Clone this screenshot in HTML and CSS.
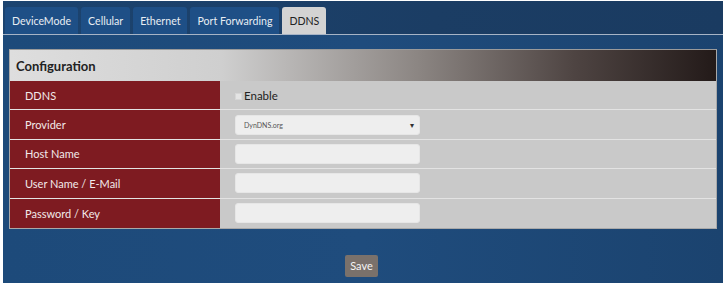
FILE: index.html
```html
<!DOCTYPE html>
<html>
<head>
<meta charset="utf-8">
<link rel="stylesheet" href="styles.css">
</head>
<body>
<div class="frame">
  <div class="tabbar">
    <div class="tab">DeviceMode</div>
    <div class="tab">Cellular</div>
    <div class="tab">Ethernet</div>
    <div class="tab">Port Forwarding</div>
    <div class="tab active">DDNS</div>
  </div>
  <div class="content">
    <div class="panel">
      <div class="panel-head">Configuration</div>
      <div class="row">
        <div class="label">DDNS</div>
        <div class="field"><span class="check"></span><span class="check-text">Enable</span></div>
      </div>
      <div class="row">
        <div class="label">Provider</div>
        <div class="field"><div class="select"><span>DynDNS.org</span><span class="arrow">▾</span></div></div>
      </div>
      <div class="row">
        <div class="label">Host Name</div>
        <div class="field"><div class="input"></div></div>
      </div>
      <div class="row">
        <div class="label">User Name / E-Mail</div>
        <div class="field"><div class="input"></div></div>
      </div>
      <div class="row last">
        <div class="label">Password / Key</div>
        <div class="field"><div class="input"></div></div>
      </div>
    </div>
    <div class="actions"><button class="save">Save</button></div>
  </div>
</div>
</body>
</html>
```
FILE: styles.css
```css
html, body { margin: 0; padding: 0; background: #ffffff; }
body { font-family: Lato, "Open Sans", sans-serif; }
.frame {
  margin: 1px 1px 0 3px;
  height: 282px;
  background: linear-gradient(90deg, #1d4a7a 0%, #1f4c7d 50%, #1b436f 100%);
}
.tabbar {
  height: 34px;
  box-sizing: border-box;
  padding: 6px 2px 1px 2px;
  display: flex;
  gap: 3px;
  background: linear-gradient(90deg, #1c4470 0%, #1b3d64 60%, #1a3b61 100%);
  border-bottom: 1px solid #a7b4c6;
}
.tab {
  height: 27px;
  box-sizing: border-box;
  padding: 0 7px;
  display: flex;
  align-items: center;
  justify-content: center;
  background: #1e4f86;
  color: #e8edf3;
  font-size: 10.6px;
  border-radius: 3px 3px 0 0;
}
.tab.active { background: #d3d3d3; color: #222; }
.content { padding: 14px 6px 0 6px; }
.panel { border: 1px solid #a9a9a9; border-top-color: #9a9a9a; }
.panel-head {
  height: 31px;
  box-sizing: border-box;
  padding-left: 6px;
  display: flex;
  align-items: center;
  font-weight: bold;
  font-size: 13px;
  color: #222;
  background: linear-gradient(90deg, #dedede 0%, #cfcfcf 30%, #8b8582 58%, #4e4442 80%, #231a19 100%);
}
.row {
  display: flex;
  height: 29.4px;
  box-sizing: border-box;
  border-bottom: 1px solid #e3e3e3;
}
.row.last { border-bottom: none; }
.label {
  width: 210px;
  padding-left: 15px;
  box-sizing: border-box;
  background: #7e1b21;
  color: #f2e9e9;
  font-size: 11px;
  display: flex;
  align-items: center;
}
.field {
  flex: 1;
  background: #c9c9c9;
  padding-left: 15px;
  display: flex;
  align-items: center;
}
.check {
  width: 5px;
  height: 5px;
  background: #e4e4e4;
  border: 1px solid #d6d6d6;
  margin-right: 2px;
  margin-top: 2px;
}
.check-text { font-size: 11.5px; color: #222; }
.input, .select {
  width: 185px;
  height: 20px;
  box-sizing: border-box;
  background: #eeeeee;
  border: 1px solid #e6e6e6;
  border-radius: 3px;
}
.select {
  display: flex;
  align-items: center;
  justify-content: space-between;
  padding: 0 5px 0 8px;
  font-size: 7px;
  color: #555;
}
.arrow { font-size: 8px; color: #333; }
.actions { display: flex; justify-content: center; padding-top: 26px; padding-right: 3px; }
.save {
  width: 33px;
  height: 22px;
  padding: 0;
  border: none;
  border-radius: 2px;
  background: #7a716b;
  color: #f4f4f4;
  font-family: Lato, "Open Sans", sans-serif;
  font-size: 11px;
}
```
